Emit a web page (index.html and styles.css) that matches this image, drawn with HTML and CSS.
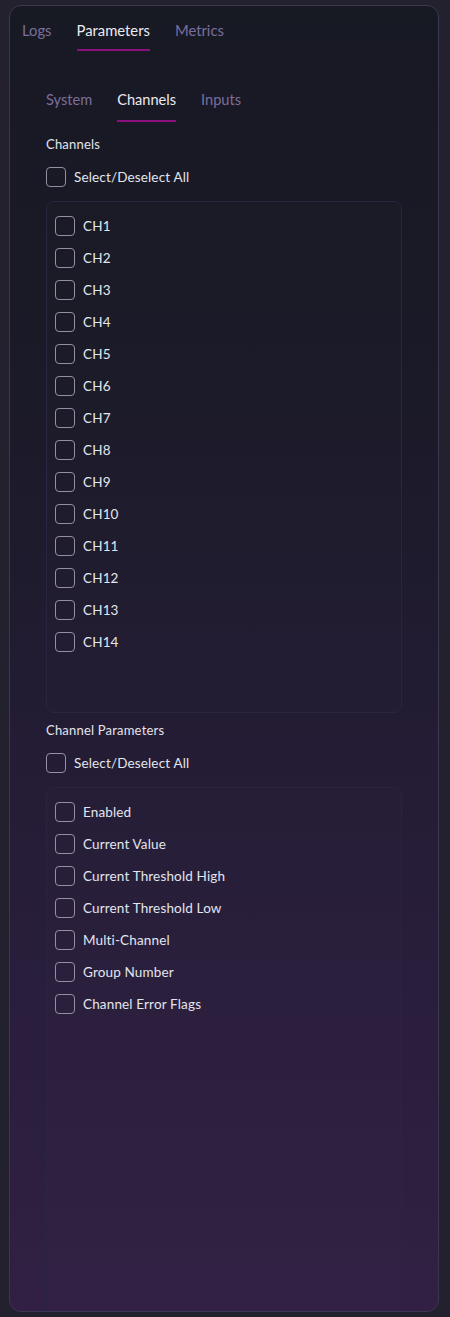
FILE: index.html
```html
<!DOCTYPE html>
<html>
<head>
<meta charset="utf-8">
<link rel="stylesheet" href="styles.css">
</head>
<body>
<div class="card">
  <div class="tabs">
    <div class="tab">Logs</div>
    <div class="tab active">Parameters</div>
    <div class="tab">Metrics</div>
  </div>
  <div class="panel">
    <div class="subtabs">
      <div class="subtab">System</div>
      <div class="subtab active">Channels</div>
      <div class="subtab">Inputs</div>
    </div>

    <div class="section-label">Channels</div>
    <label class="check all"><span class="box"></span><span>Select/Deselect All</span></label>
    <div class="list list-channels">
      <label class="check"><span class="box"></span><span>CH1</span></label>
      <label class="check"><span class="box"></span><span>CH2</span></label>
      <label class="check"><span class="box"></span><span>CH3</span></label>
      <label class="check"><span class="box"></span><span>CH4</span></label>
      <label class="check"><span class="box"></span><span>CH5</span></label>
      <label class="check"><span class="box"></span><span>CH6</span></label>
      <label class="check"><span class="box"></span><span>CH7</span></label>
      <label class="check"><span class="box"></span><span>CH8</span></label>
      <label class="check"><span class="box"></span><span>CH9</span></label>
      <label class="check"><span class="box"></span><span>CH10</span></label>
      <label class="check"><span class="box"></span><span>CH11</span></label>
      <label class="check"><span class="box"></span><span>CH12</span></label>
      <label class="check"><span class="box"></span><span>CH13</span></label>
      <label class="check"><span class="box"></span><span>CH14</span></label>
    </div>

    <div class="section-label second">Channel Parameters</div>
    <label class="check all"><span class="box"></span><span>Select/Deselect All</span></label>
    <div class="list list-params">
      <label class="check"><span class="box"></span><span>Enabled</span></label>
      <label class="check"><span class="box"></span><span>Current Value</span></label>
      <label class="check"><span class="box"></span><span>Current Threshold High</span></label>
      <label class="check"><span class="box"></span><span>Current Threshold Low</span></label>
      <label class="check"><span class="box"></span><span>Multi-Channel</span></label>
      <label class="check"><span class="box"></span><span>Group Number</span></label>
      <label class="check"><span class="box"></span><span>Channel Error Flags</span></label>
    </div>
  </div>
</div>
</body>
</html>
```
FILE: styles.css
```css
html, body {
  margin: 0;
  padding: 0;
}
body {
  background: #22212d;
  font-family: Lato, "Open Sans", "Noto Sans", sans-serif;
  color: #e2e4ee;
}
.card {
  box-sizing: border-box;
  margin: 5px 11px 0 9px;
  height: 1307px;
  border: 1px solid #3d3650;
  border-radius: 12px;
  padding: 0 12px;
  background: linear-gradient(180deg, #171923 0%, #1b1a28 30%, #261d38 65%, #312043 100%);
  overflow: hidden;
}
.tabs {
  display: flex;
  gap: 25px;
}
.tab {
  padding-top: 14px;
  padding-bottom: 9px;
  font-size: 14.8px;
  line-height: 20px;
  color: #7c6e9c;
  border-bottom: 2px solid transparent;
}
.tab.active {
  color: #eceaf2;
  border-bottom-color: #8c0f7d;
}
.panel {
  padding: 0 24px;
}
.subtabs {
  display: flex;
  gap: 25px;
  margin-top: 39px;
}
.subtab {
  font-size: 14.6px;
  line-height: 20px;
  padding-bottom: 10px;
  color: #7c6e9c;
  border-bottom: 2px solid transparent;
}
.subtab.active {
  color: #eceaf2;
  border-bottom-color: #8c0f7d;
}
.section-label {
  margin-top: 13px;
  font-size: 13px;
  line-height: 18px;
  letter-spacing: 0.2px;
  color: #e2e4ee;
}
.section-label.second {
  margin-top: 8px;
}
.check {
  display: flex;
  align-items: center;
  gap: 8px;
  height: 20px;
  font-size: 13.5px;
  letter-spacing: 0.15px;
  color: #e2e6ee;
}
.check.all {
  margin-top: 14px;
}
.box {
  box-sizing: border-box;
  flex: none;
  width: 20px;
  height: 20px;
  border: 1.5px solid #968ea3;
  border-radius: 4px;
}
.list {
  box-sizing: border-box;
  margin-top: 14px;
  border: 1px solid #2a2440;
  border-radius: 8px;
  padding: 14px 8px;
  display: flex;
  flex-direction: column;
  gap: 12px;
  background: rgba(255, 255, 255, 0.008);
}
.list-channels {
  height: 512px;
}
.list-params {
  height: 560px;
}
```
